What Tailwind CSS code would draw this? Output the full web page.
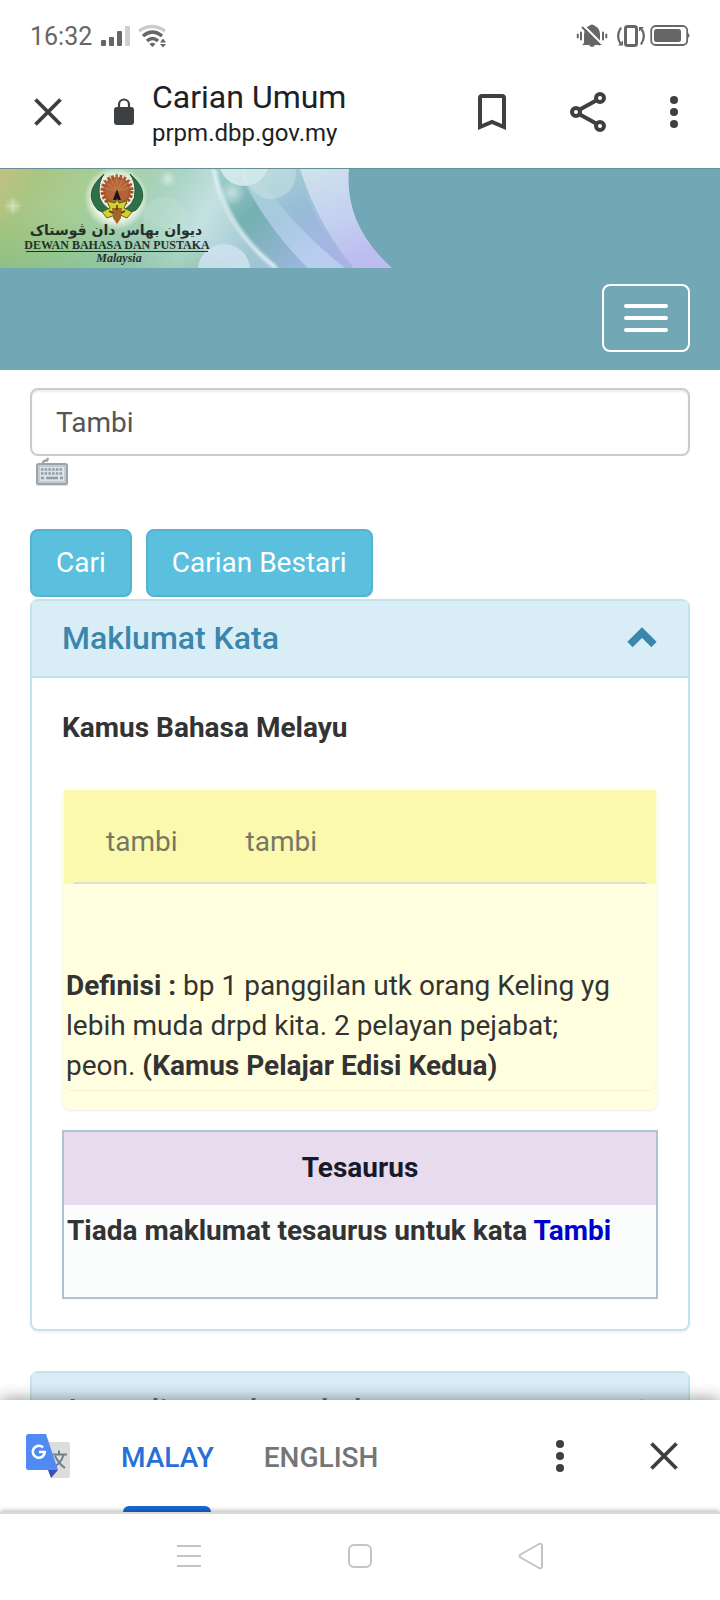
<!DOCTYPE html>
<html lang="ms">
<head>
<meta charset="utf-8">
<meta name="viewport" content="width=device-width, initial-scale=1">
<title>Carian Umum</title>
<script src="https://cdn.jsdelivr.net/npm/@tailwindcss/browser@4"></script>
</head>
<body class="flex h-screen flex-col overflow-hidden bg-white font-[Roboto,sans-serif] text-[28px] leading-10 text-[#333333]">

<!-- Status bar -->
<div class="flex h-[72px] shrink-0 items-center px-[30px] text-[#666666]">
  <span class="pt-0.5 text-[25px] leading-8">16:32</span>
  <svg class="ml-2 h-6 w-[30px]" viewBox="0 0 30 24" fill="#666666" aria-hidden="true">
    <rect x="1" y="16" width="5" height="6" rx="1"/><rect x="9" y="13" width="5" height="9" rx="1"/><rect x="17" y="7" width="5" height="15" rx="1"/><rect x="25" y="2" width="5" height="20" rx="1" fill="#cfcfcf"/>
  </svg>
  <svg class="ml-2 h-6 w-[30px]" viewBox="0 0 30 24" fill="none" aria-hidden="true">
    <path d="M1 7 Q14 -2 27 7" stroke="#cccccc" stroke-width="3.500"/>
    <path d="M5 12 Q14.500 4 24 12" stroke="#666666" stroke-width="3.500"/>
    <path d="M9 17 Q14.500 12 20 17" stroke="#666666" stroke-width="3.500"/>
    <path d="M11.500 20 Q14.500 17.500 17.500 20 L14.500 23Z M25 14.500 l3 4 h-6Z M25 23.500 l3 -3.500 h-6Z" fill="#666666"/>
  </svg>
  <div class="ml-auto flex items-center">
    <svg class="h-6 w-8" viewBox="0 0 32 24" fill="#666666" aria-hidden="true">
      <path d="M8 19 V11 Q8 3 13 2 Q16 -1 19 2 Q24 4 24 11 V17 L26 19 V21 H19 Q16 25 13 21 H6Z"/>
      <path d="M8 2 L26 20" stroke="#ffffff" stroke-width="2.200"/><path d="M6 3 L24 21" stroke="#666666" stroke-width="2"/>
      <path d="M5 8.500v7M1.800 10.500v3M27 8.500v7M30.300 10.500v3" stroke="#666666" stroke-width="2" stroke-linecap="round"/>
    </svg>
    <svg class="ml-2 h-6 w-[30px]" viewBox="0 0 30 24" fill="none" stroke="#666666" stroke-width="2.200" aria-hidden="true">
      <rect x="9.500" y="2.500" width="11" height="19" rx="2" stroke-width="3"/>
      <path d="M5 3.500 Q-.5 12 4.500 19.500 M25.500 5 Q30.500 12 25 20.500"/><path d="M2 21.500 h5 v-5Z M28 3 h-5 v4.500Z" fill="#666666" stroke="none"/>
    </svg>
    <svg class="ml-1 h-6 w-10" viewBox="0 0 40 24" aria-hidden="true">
      <rect x="1.200" y="2" width="36" height="19" rx="4.500" fill="none" stroke="#666666" stroke-width="1.800"/>
      <rect x="4" y="5" width="27" height="13" rx="2.500" fill="#666666"/><path d="M38 9 q3 2.500 0 5Z" fill="#666666"/>
    </svg>
  </div>
</div>

<!-- Browser toolbar -->
<header class="flex h-24 shrink-0 items-center px-[30px] pb-4 text-[#3c4043]">
  <button type="button" aria-label="Tutup" class="p-1">
    <svg class="size-7" viewBox="0 0 28 28" fill="none" stroke="currentColor" stroke-width="3.800"><path d="M1.500 1.500 L26.500 26.500 M26.500 1.500 L1.500 26.500"/></svg>
  </button>
  <svg class="ml-12 h-7 w-5 shrink-0" viewBox="0 0 20 28" aria-hidden="true"><rect x="0" y="9" width="20" height="18" rx="3" fill="#3c4043"/><path d="M5 10 V6.500 a5 5 0 0 1 10 0 V10" fill="none" stroke="#3c4043" stroke-width="2.200"/></svg>
  <div class="ml-[18px] min-w-0 flex-1 pt-1.5 text-[#202124]">
    <div class="truncate text-[32px] leading-9">Carian Umum</div>
    <div class="truncate text-[24px] leading-9">prpm.dbp.gov.my</div>
  </div>
  <button type="button" aria-label="Tandai" class="shrink-0">
    <svg class="h-9 w-7" viewBox="0 0 28 36" fill="none" stroke="currentColor" stroke-width="4"><path d="M2 33 V4 a2 2 0 0 1 2 -2 H24 a2 2 0 0 1 2 2 V33 L14 28Z"/></svg>
  </button>
  <button type="button" aria-label="Kongsi" class="ml-16 shrink-0">
    <svg class="h-10 w-9" viewBox="0 0 36 40" fill="none" stroke="currentColor" stroke-width="4"><circle cx="6" cy="20" r="4"/><circle cx="30" cy="6" r="4"/><circle cx="30" cy="34" r="4"/><path d="M9 18 L27 8 M9 22 L27 32"/></svg>
  </button>
  <button type="button" aria-label="Menu pelayar" class="ml-16 mr-3 shrink-0">
    <svg class="h-8 w-2" viewBox="0 0 8 32" fill="currentColor" overflow="visible"><circle cx="4" cy="4" r="4"/><circle cx="4" cy="16" r="4"/><circle cx="4" cy="28" r="4"/></svg>
  </button>
</header>

<!-- Web page -->
<main class="min-h-0 flex-1 overflow-hidden">
  <div class="border-t border-[#668f99] bg-[#72a8b6]">
    <svg class="block h-[99px] w-[392px]" viewBox="0 0 392 99" role="img" aria-label="Dewan Bahasa dan Pustaka Malaysia">
      <defs>
        <linearGradient id="sky" x1="0" y1="0" x2="1" y2="0.150">
          <stop offset="0" stop-color="#c2c184"/><stop offset=".1" stop-color="#a9c681"/><stop offset=".28" stop-color="#a6cf9c"/><stop offset=".45" stop-color="#a9d3c3"/><stop offset=".58" stop-color="#c4e1e1"/><stop offset=".75" stop-color="#9fc8d4"/><stop offset="1" stop-color="#a9b5e2"/>
        </linearGradient>
        <linearGradient id="dark" x1="0" y1="0" x2="1" y2="1"><stop offset="0" stop-color="#a5d2d2"/><stop offset=".4" stop-color="#74b0b0"/><stop offset="1" stop-color="#a3b8e6"/></linearGradient>
        <linearGradient id="mid" x1="0" y1="0" x2="0.400" y2="1"><stop offset="0" stop-color="#a8d0d6"/><stop offset=".5" stop-color="#93b9d6"/><stop offset="1" stop-color="#a3aee0"/></linearGradient>
        <linearGradient id="pale" x1="0" y1="0" x2="0.400" y2="1"><stop offset="0" stop-color="#a5cfd4"/><stop offset=".6" stop-color="#a8c9e0"/><stop offset="1" stop-color="#b9cdf0"/></linearGradient>
        <linearGradient id="rib" x1="0" y1="0" x2="0.300" y2="1"><stop offset="0" stop-color="#cfe3ec"/><stop offset=".6" stop-color="#c3d0f0"/><stop offset="1" stop-color="#bdbdf0"/></linearGradient>
        <linearGradient id="lower" x1="0" y1="0" x2="0" y2="1"><stop offset="0" stop-color="#6ab077" stop-opacity="0"/><stop offset="1" stop-color="#63ad76" stop-opacity=".35"/></linearGradient>
        <radialGradient id="halo"><stop offset=".7" stop-color="#eef5e4"/><stop offset="1" stop-color="#eef5e4" stop-opacity="0"/></radialGradient>
        <radialGradient id="spark"><stop offset="0" stop-color="#fff"/><stop offset="1" stop-color="#fff" stop-opacity="0"/></radialGradient>
        <clipPath id="edge"><path d="M0 0 H349 Q344 56 392 99 H0Z"/></clipPath>
        <filter id="soft"><feGaussianBlur stdDeviation="1.500"/></filter>
      </defs>
      <g clip-path="url(#edge)">
        <rect width="392" height="99" fill="url(#sky)"/>
        <path d="M0 40 H90 Q150 40 230 99 H0Z" fill="url(#lower)"/>
        <circle cx="165" cy="50" r="22" fill="#c4e2d0" opacity=".35"/>
        <path d="M214 0 Q222 60 280 99 H320 L270 30 L245 0Z" fill="url(#dark)"/>
        <path d="M214 0 Q225 58 276 99" stroke="#eef8f8" stroke-width="4" fill="none" opacity=".8" filter="url(#soft)"/>
        <path d="M248 20 Q272 64 308 99 H354 Q308 50 300 0 H238Z" fill="url(#pale)"/>
        <path d="M262 12 Q295 60 345 99 H354 Q308 50 300 0 H256Z" fill="url(#mid)" opacity=".8"/>
        <path d="M300 0 Q318 56 354 99 H392 Q344 56 349 0Z" fill="url(#rib)"/>
        <circle cx="244" cy="-8" r="25" fill="#e6f2f4" opacity=".75"/><circle cx="271" cy="5" r="25" fill="#cce5e4" opacity=".5"/>
        <circle cx="224" cy="101" r="26" fill="#cfe3f0" opacity=".85"/>
        <circle cx="232" cy="24" r="13" fill="url(#spark)" opacity=".5"/><circle cx="168" cy="10" r="9" fill="url(#spark)" opacity=".5"/>
        <circle cx="13" cy="37" r="9" fill="url(#spark)" opacity=".4"/><path d="M13 29V45M5 37H21" stroke="#fff" stroke-width=".6" opacity=".5"/>
      </g>
      <circle cx="116" cy="29" r="32" fill="url(#halo)"/>
      <path d="M104 5 Q82 24 98 41 Q107 46 115 43 Q98 36 99 22 Q99 12 104 5Z M130 5 Q152 24 136 41 Q127 46 119 43 Q136 36 135 22 Q135 12 130 5Z" fill="#2f7048" stroke="#24533a"/>
      <circle cx="117" cy="22" r="14" fill="#b5643a"/>
      <circle cx="117" cy="22" r="14" fill="none" stroke="#a5522e" stroke-width="5" stroke-dasharray="2.500 1.500"/>
      <path d="M117 22 L101 18 M117 22 L103 11 M117 22 L109 6 M117 22 L117 4 M117 22 L125 6 M117 22 L131 11 M117 22 L133 18" stroke="#d28a57" stroke-width=".7"/>
      <path d="M117 20 L121 31 H113Z" fill="#1b1410"/>
      <path d="M107 32 L115 34 L117 30 L119 34 L127 32 L124 39 L132 43 L127 49 L118 45 L107 49 L102 43 L110 39Z" fill="#d9ce2e" stroke="#4f6b25"/>
      <path d="M112 39 H122 L121 49 L117 55 L113 49Z" fill="#a66329"/><path d="M109 42 l4 2 M125 42 l-4 2 M117 36 v5" stroke="#33451f" stroke-width="1.500"/>
      <g text-anchor="middle" fill="#26302a">
        <text x="116" y="66" direction="rtl" font-family="'DejaVu Sans',sans-serif" font-size="14" font-weight="bold">ديوان بهاس دان ڤوستاک</text>
        <text x="117" y="80" font-family="'Liberation Serif',serif" font-size="12" font-weight="bold">DEWAN BAHASA DAN PUSTAKA</text>
        <text x="119" y="93" font-family="'Liberation Serif',serif" font-size="12" font-weight="bold" font-style="italic">Malaysia</text>
      </g>
      <path d="M26 82.500 H208" stroke="#26302a" stroke-width="1"/>
    </svg>
    <div class="flex justify-end px-[30px] pt-4 pb-[18px]">
      <button type="button" aria-label="Menu" class="flex h-[68px] w-[88px] flex-col items-center justify-center gap-2 rounded-lg border-2 border-white">
        <span class="h-1 w-11 rounded-xs bg-white"></span><span class="h-1 w-11 rounded-xs bg-white"></span><span class="h-1 w-11 rounded-xs bg-white"></span>
      </button>
    </div>
  </div>

  <div class="px-[30px] pt-[18px]">
    <form onsubmit="return false">
      <input type="text" aria-label="Carian" value="Tambi" class="block h-[68px] w-full rounded-lg border-2 border-[#cccccc] bg-white px-6 text-[#555555] shadow-[inset_0_2px_2px_rgba(0,0,0,0.075)]">
      <button type="button" aria-label="Papan kekunci" class="mt-px ml-1.5 block">
        <svg class="h-[30px] w-8" viewBox="0 0 32 30">
          <path d="M7 7 Q7 3 11 3.500 L12 1" stroke="#9aa3a9" stroke-width="2.500" fill="none"/>
          <rect x="1" y="7" width="30" height="20" rx="1.500" fill="#c3cbd1" stroke="#98a3ab" stroke-width="2"/>
          <rect x="4" y="10" width="24" height="14" fill="#dde3e7"/>
          <path d="M5 12.500H27M5 16.500H27" stroke="#929da5" stroke-width="2.500" stroke-dasharray="2.500 1.200"/><path d="M5 21h3M10 21h12M24 21h3" stroke="#929da5" stroke-width="2.500"/>
          <path d="M0 28.500H32" stroke="#dfe3e6"/>
        </svg>
      </button>
      <div class="mt-[42px] flex gap-[14px]">
        <button type="submit" class="h-[68px] rounded-lg border-2 border-[#54b4d0] bg-[#5bbfde] px-6 text-white">Cari</button>
        <button type="button" class="h-[68px] rounded-lg border-2 border-[#54b4d0] bg-[#5bbfde] px-6 text-white">Carian Bestari</button>
      </div>
    </form>

    <section class="mt-0.5 rounded-lg border-2 border-[#c3e4ec] shadow-[0_2px_2px_rgba(0,0,0,0.05)]">
      <h2 class="border-b-2 border-[#bfe5ec] bg-[#d9edf6]">
        <button type="button" class="flex w-full items-center justify-between px-[30px] py-5 text-left text-[32px] leading-[35px] font-medium text-[#3a87ad]">Maklumat Kata
          <svg class="h-5 w-8" viewBox="0 0 32 20" overflow="visible" fill="none" stroke="currentColor" stroke-width="7.500" aria-hidden="true"><path d="M4 15.500 L16 3.500 L28 15.500"/></svg>
        </button>
      </h2>
      <div class="p-[30px]">
        <h3 class="font-bold">Kamus Bahasa Melayu</h3>
        <div class="mt-[41px] rounded-lg bg-[#fffede] px-0.5 pt-px pb-5 shadow-[0_1px_2px_rgba(0,0,0,0.08)]">
          <div class="bg-[#fbf9ae] px-[10px]">
            <div class="flex gap-1 border-b-2 border-[#dddddd] text-[#777766]">
              <button type="button" class="px-8 pt-8 pb-5">tambi</button>
              <button type="button" class="px-8 pt-8 pb-5">tambi</button>
            </div>
          </div>
          <p class="rounded-b-lg pt-[82px] pr-6 pb-1 pl-0.5 shadow-[0_1px_1px_rgba(0,0,0,0.06)]"><b>Definisi :</b> bp 1 panggilan utk orang Keling yg lebih muda drpd kita. 2 pelayan pejabat; peon. <b>(Kamus Pelajar Edisi Kedua)</b></p>
        </div>
        <table class="mt-5 w-full border-collapse border-2 border-[#aac4d6]">
          <thead><tr><th class="bg-[#e8dbee] px-1 pt-4 pb-[17px] text-center font-bold text-[#171a2b]">Tesaurus</th></tr></thead>
          <tbody><tr><td class="bg-[#fbfdfd] px-[3px] pt-1.5 pb-[46px] text-left font-bold">Tiada maklumat tesaurus untuk kata <a href="#" class="text-[#0000cc]">Tambi</a></td></tr></tbody>
        </table>
      </div>
    </section>

    <section class="mt-10 rounded-lg border-2 border-[#c3e4ec]">
      <h2 class="bg-[#d9edf6]">
        <button type="button" class="flex w-full items-center justify-between px-[30px] py-5 text-left text-[32px] leading-[35px] font-medium text-[#3a87ad]">Asas di rumah anda kerana
          <svg class="h-5 w-8" viewBox="0 0 32 20" overflow="visible" fill="none" stroke="currentColor" stroke-width="7.500" aria-hidden="true"><path d="M4 15.500 L16 3.500 L28 15.500"/></svg>
        </button>
      </h2>
    </section>
  </div>
</main>

<!-- Translate bar -->
<div class="relative flex h-[112px] shrink-0 items-stretch bg-white pl-[26px] pr-[42px] shadow-[0_0_16px_rgba(0,0,0,0.45)]">
  <svg class="h-11 w-11 self-center" viewBox="0 0 44 44" role="img" aria-label="Terjemah">
    <path d="M14 8 H42 a2 2 0 0 1 2 2 V42 a2 2 0 0 1 -2 2 H25Z" fill="#dddddd"/>
    <path d="M27 20.500 H41 M33 16.500 V20 M37.500 21 Q35 30 26 34 M29 22 Q33 30 39 34" fill="none" stroke="#6f8086" stroke-width="2"/>
    <path d="M22 36 H32 L25 44Z" fill="#3a4fb5"/>
    <path d="M2.500 0 H20 L32 36 H2.500 a2.500 2.500 0 0 1 -2.500 -2.500 V2.500 a2.500 2.500 0 0 1 2.500 -2.500Z" fill="#4f8bf2"/>
    <path d="M17 13.500 A6 6 0 1 0 18.800 18 H13" fill="none" stroke="#fff" stroke-width="2.600"/>
  </svg>
  <div class="ml-[51px] flex gap-[50px] font-medium" role="tablist">
    <button type="button" role="tab" aria-selected="true" class="flex flex-col items-center text-[#2670d8]"><span class="flex flex-1 items-center pt-2.5">MALAY</span><span class="h-1.5 w-[88px] rounded-t-md bg-[#1b67d0]"></span></button>
    <button type="button" role="tab" aria-selected="false" class="pt-1 text-[#757575]">ENGLISH</button>
  </div>
  <div class="ml-auto flex items-center text-[#3c4043]">
    <button type="button" aria-label="Pilihan terjemahan"><svg class="h-8 w-2" viewBox="0 0 8 32" fill="currentColor" overflow="visible"><circle cx="4" cy="4" r="4"/><circle cx="4" cy="16" r="4"/><circle cx="4" cy="28" r="4"/></svg></button>
    <button type="button" aria-label="Tutup terjemahan" class="ml-[86px]"><svg class="size-7" viewBox="0 0 28 28" fill="none" stroke="currentColor" stroke-width="3.800"><path d="M1.500 1.500 L26.500 26.500 M26.500 1.500 L1.500 26.500"/></svg></button>
  </div>
</div>

<!-- System navigation -->
<nav class="relative flex h-[88px] shrink-0 items-center justify-center gap-[147px] border-t-2 border-[#d9d9d9] bg-white pb-0.5 text-[#c4c4c4] shadow-[0_-1px_5px_rgba(0,0,0,0.3)]">
  <button type="button" aria-label="Aplikasi terkini"><svg class="size-6" viewBox="0 0 24 24" stroke="currentColor" stroke-width="2"><path d="M0 2H24M0 12H24M0 22H24"/></svg></button>
  <button type="button" aria-label="Utama"><svg class="size-6" viewBox="0 0 24 24" fill="none" stroke="currentColor" stroke-width="2"><rect x="1" y="1" width="22" height="22" rx="5"/></svg></button>
  <button type="button" aria-label="Kembali"><svg class="size-6" viewBox="0 0 24 24" overflow="visible" fill="none" stroke="currentColor" stroke-width="2" stroke-linejoin="round"><path d="M1.500 10.500 Q-.5 12 1.500 13.500 L20 24 Q23 25 23 22 V2 Q23 -1 20 0Z"/></svg></button>
</nav>
</body>
</html>
